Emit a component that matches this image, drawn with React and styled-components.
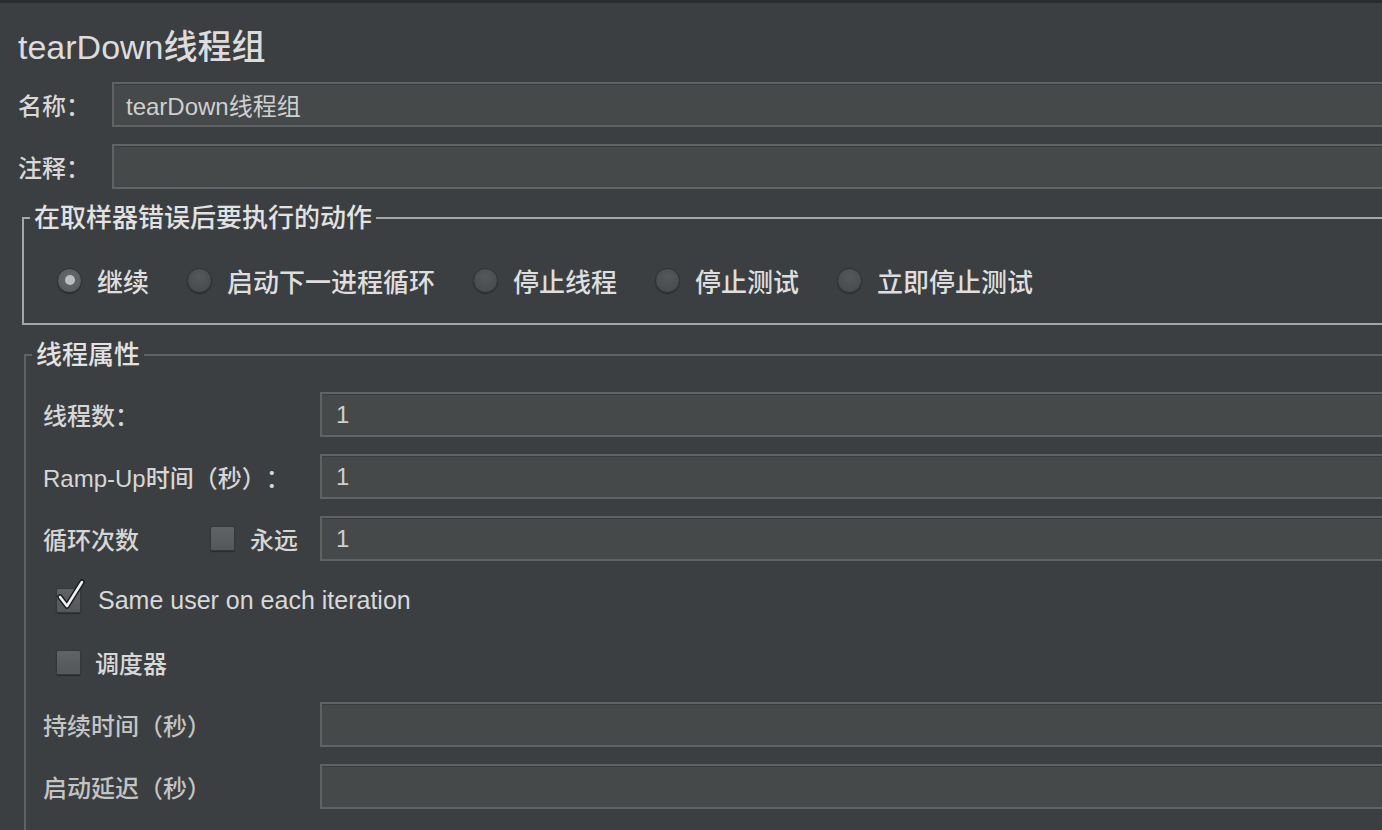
import React from "react";
import styled, { createGlobalStyle } from "styled-components";

const Global = createGlobalStyle`
  html, body { margin: 0; padding: 0; background: #3c3f41; overflow: hidden; }
  * { box-sizing: border-box; text-spacing-trim: space-all; }
`;

const FONT = `"Liberation Sans", "Noto Sans CJK SC", sans-serif`;

const Page = styled.div`
  width: 1382px;
  height: 830px;
  overflow: hidden;
  background: #3c3f41;
  border-top: 3px solid #2b2c2e;
  font-family: ${FONT};
  font-weight: 500;
  color: #d6d6d6;
`;

const Title = styled.div`
  margin: 23px 0 0 18px;
  font-size: 34px;
  line-height: 42px;
  color: #dcdcdc;
`;

const TopRow = styled.div`
  display: flex;
  align-items: center;
  height: 45px;
  margin-top: ${(p) => p.$mt}px;
  padding-left: 18px;
`;

const TopLabel = styled.div`
  width: 94px;
  flex: none;
  font-size: 24px;
  color: #d8d8d8;
`;

const Field = styled.div`
  flex: 1;
  height: 45px;
  background: #45494a;
  border: 2px solid #606366;
  border-right: none;
  display: flex;
  align-items: center;
  padding-left: ${(p) => p.$pad || 12}px;
  font-size: 24px;
  font-weight: 400;
  color: #cfcfcf;
  box-shadow: inset 0 1px 0 #3a3d3f;
`;

const Group = styled.fieldset`
  margin: ${(p) => p.$mt}px 0 0 ${(p) => p.$ml}px;
  padding: 0;
  border: 2px solid ${(p) => p.$line};
  border-right: none;
  ${(p) => (p.$open ? "border-bottom: none;" : "")}
  min-width: 0;
`;

const Legend = styled.legend`
  margin-left: 6px;
  padding: 0 4px;
  font-size: 26px;
  line-height: 30px;
  color: #e2e2e2;
`;

const RadioRow = styled.div`
  display: flex;
  align-items: center;
  height: 30px;
  padding: 32px 0 28px 33px;
  box-sizing: content-box;
  gap: 38px;
`;

const RadioItem = styled.label`
  display: flex;
  align-items: center;
  gap: 15px;
  font-size: 26px;
  color: #dedede;
`;

const RadioDot = styled.span`
  width: 25px;
  height: 25px;
  border-radius: 50%;
  flex: none;
  display: flex;
  align-items: center;
  justify-content: center;
  background: ${(p) =>
    p.$on
      ? "radial-gradient(circle at 50% 40%, #66696c, #55585b)"
      : "radial-gradient(circle at 50% 35%, #55585b, #45484a)"};
  border: 1px solid #2f3133;
  box-shadow: 0 1px 1px rgba(0, 0, 0, 0.35);
  &::after {
    content: "";
    display: ${(p) => (p.$on ? "block" : "none")};
    width: 10px;
    height: 10px;
    border-radius: 50%;
    background: #bdbdbd;
  }
`;

const Grid = styled.div`
  display: grid;
  grid-template-columns: 277px 1fr;
  grid-auto-rows: 45px;
  row-gap: 17px;
  padding: 22px 0 40px 17px;
`;

const Label = styled.div`
  display: flex;
  align-items: center;
  font-size: 24px;
  color: ${(p) => (p.$dim ? "#c4c4c4" : "#d6d6d6")};
  padding-right: 22px;
`;

const Spacer = styled.div`
  flex: 1;
`;

const CheckLine = styled.label`
  grid-column: 1 / -1;
  display: flex;
  align-items: center;
  padding-left: 13px;
  gap: ${(p) => p.$gap}px;
  font-size: ${(p) => p.$fs || 24}px;
  color: #d8d8d8;
`;

const Inline = styled.span`
  display: flex;
  align-items: center;
  gap: 15px;
`;

const Box = styled.span`
  position: relative;
  width: 25px;
  height: 25px;
  flex: none;
  background: linear-gradient(#606366, #55585a);
  border: 1px solid #35373a;
  border-radius: 2px;
  box-shadow: 0 1px 1px rgba(0, 0, 0, 0.35);
`;

const Tick = styled.svg`
  position: absolute;
  left: 1px;
  top: -9px;
  overflow: visible;
`;

const Check = ({ on }) => (
  <Box>
    {on && (
      <Tick width="26" height="30" viewBox="0 0 26 30">
        <path d="M2 17 L9 26 L24 2" fill="none" stroke="#1c1d1f" strokeWidth="5.5" strokeLinecap="round" strokeLinejoin="round" />
        <path d="M2 17 L9 26 L24 2" fill="none" stroke="#f0f0f0" strokeWidth="2.6" strokeLinecap="round" strokeLinejoin="round" />
      </Tick>
    )}
  </Box>
);

const radios = ["继续", "启动下一进程循环", "停止线程", "停止测试", "立即停止测试"];

export default function App() {
  return (
    <>
      <Global />
      <Page>
        <Title>tearDown线程组</Title>
        <TopRow $mt={14}>
          <TopLabel>名称：</TopLabel>
          <Field>tearDown线程组</Field>
        </TopRow>
        <TopRow $mt={17}>
          <TopLabel>注释：</TopLabel>
          <Field />
        </TopRow>

        <Group $mt={14} $ml={22} $line="#a4a7aa">
          <Legend>在取样器错误后要执行的动作</Legend>
          <RadioRow>
            {radios.map((r, i) => (
              <RadioItem key={r}>
                <RadioDot $on={i === 0} />
                {r}
              </RadioItem>
            ))}
          </RadioRow>
        </Group>

        <Group $mt={15} $ml={24} $line="#5f6264" $open>
          <Legend>线程属性</Legend>
          <Grid>
            <Label>线程数：</Label>
            <Field $pad={14}>1</Field>
            <Label>Ramp-Up时间（秒）：</Label>
            <Field $pad={14}>1</Field>
            <Label>
              循环次数
              <Spacer />
              <Inline>
                <Check />
                永远
              </Inline>
            </Label>
            <Field $pad={14}>1</Field>
            <CheckLine $gap={17} $fs={25}>
              <Check on />
              Same user on each iteration
            </CheckLine>
            <CheckLine $gap={14}>
              <Check />
              调度器
            </CheckLine>
            <Label $dim>持续时间（秒）</Label>
            <Field $pad={14} />
            <Label $dim>启动延迟（秒）</Label>
            <Field $pad={14} />
          </Grid>
        </Group>
      </Page>
    </>
  );
}
